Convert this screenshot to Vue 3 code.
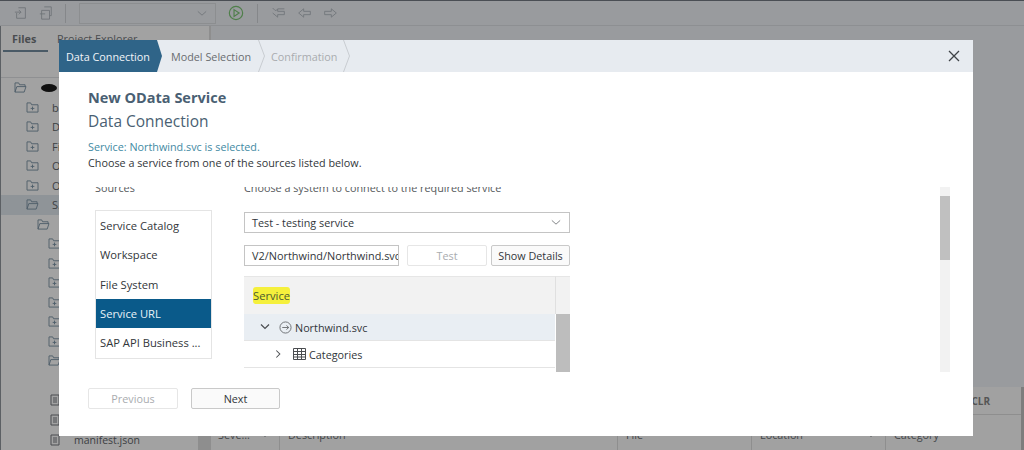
<script setup>
const sources = ['Service Catalog', 'Workspace', 'File System', 'Service URL', 'SAP API Business ...']
const treeFolders = [
  { label: 'bi', open: false, indent: 0 },
  { label: 'D', open: false, indent: 0 },
  { label: 'Fi', open: false, indent: 0 },
  { label: 'O', open: false, indent: 0 },
  { label: 'O', open: false, indent: 0 },
  { label: 'S.', open: true, indent: 0, active: true },
  { label: '', open: true, indent: 1 },
  { label: '', open: false, indent: 2 },
  { label: '', open: false, indent: 2 },
  { label: '', open: false, indent: 2 },
  { label: '', open: false, indent: 2 },
  { label: '', open: false, indent: 2 },
  { label: '', open: false, indent: 2 },
  { label: '', open: true, indent: 2 },
]
</script>

<template>
  <div class="page">
    <header class="toolbar">
      <svg class="tb-icon" viewBox="0 0 16 16"><path d="M5 2h8v12H3V8M1 7h7M5.500 4.500 8 7 5.500 9.500" /></svg>
      <svg class="tb-icon" viewBox="0 0 16 16"><path d="M6 1h8v10h-2M3 5h9v10H3zM1 9h6" /></svg>
      <span class="tb-sep"></span>
      <div class="tb-select">
        <svg viewBox="0 0 12 8"><path d="M1 1.500 6 6l5-4.500" /></svg>
      </div>
      <svg class="tb-run" viewBox="0 0 18 18"><circle cx="9" cy="9" r="7.500" /><path d="M6.800 5.200 12.500 9l-5.700 3.800z" /></svg>
      <span class="tb-sep"></span>
      <svg class="tb-arrow" viewBox="0 0 18 14"><path d="M2 1l3 3 3-1v-1l8 0M8 3v2h8v4H8v3L2 7" /></svg>
      <svg class="tb-arrow" viewBox="0 0 18 14"><path d="M8 2 2 7l6 5V9h8V5H8z" /></svg>
      <svg class="tb-arrow" viewBox="0 0 18 14"><path d="M10 2l6 5-6 5V9H2V5h8z" /></svg>
    </header>

    <div class="workspace">
      <aside class="sidebar">
        <div class="tabs">
          <span class="tab active">Files</span>
          <span class="tab">Project Explorer</span>
        </div>
        <div class="side-tools"></div>
        <div class="tree">
          <div class="tree-row root">
            <svg class="folder" viewBox="0 0 14 12"><path d="M1 11V1h4l1 2h6v2M1 11l2-6h10l-2 6z" /></svg>
            <span class="blot"></span>
          </div>
          <div v-for="(f, i) in treeFolders" :key="i" class="tree-row" :class="[{ hl: f.active }, 'ind' + f.indent]">
            <svg v-if="f.open" class="folder" viewBox="0 0 14 12"><path d="M1 11V1h4l1 2h6v2M1 11l2-6h10l-2 6z" /></svg>
            <svg v-else class="folder" viewBox="0 0 14 12"><path d="M1 1h4l1 2h7v8H1zM7 5v4M5 7h4" /></svg>
            <span>{{ f.label }}</span>
          </div>
        </div>
        <div class="files">
          <div class="file-row"><svg class="doc" viewBox="0 0 10 12"><path d="M1 1h8v10H1zM3 4h4M3 6h4M3 8h4" /></svg></div>
          <div class="file-row"><svg class="doc" viewBox="0 0 10 12"><path d="M1 1h8v10H1zM3 4h4M3 6h4M3 8h4" /></svg></div>
          <div class="file-row"><svg class="doc" viewBox="0 0 10 12"><path d="M1 1h8v10H1zM3 4h4M3 6h4M3 8h4" /></svg><span>manifest.json</span></div>
        </div>
      </aside>
      <div class="splitter"></div>
      <main class="content">
        <div class="spacer"></div>
        <div class="table-head"><span>CLR</span></div>
        <div class="table-row">
          <span class="cell sort first">Seve...</span>
          <span class="cell">Description</span>
          <span class="cell">File</span>
          <span class="cell sort">Location</span>
          <span class="cell">Category</span>
        </div>
      </main>
    </div>

    <section class="modal">
      <div class="steps">
        <div class="step current">Data Connection</div>
        <div class="step">Model Selection<svg viewBox="0 0 7 32"><path d="M0.500 0 6.500 16 0.500 32" /></svg></div>
        <div class="step muted">Confirmation<svg viewBox="0 0 7 32"><path d="M0.500 0 6.500 16 0.500 32" /></svg></div>
        <svg class="close" viewBox="0 0 12 12"><path d="M1 1l10 10M11 1 1 11" /></svg>
      </div>

      <div class="body">
        <h1>New OData Service</h1>
        <h2>Data Connection</h2>
        <p class="selected">Service: Northwind.svc is selected.</p>
        <p class="hint">Choose a service from one of the sources listed below.</p>

        <div class="scroll-area">
          <div class="scroll-inner">
            <div class="src-col">
              <div class="src-label">Sources</div>
              <ul class="src-list">
                <li v-for="s in sources" :key="s" :class="{ on: s === 'Service URL' }">{{ s }}</li>
              </ul>
            </div>
            <div class="main-col">
              <div class="sys-label">Choose a system to connect to the required service</div>
              <div class="select">
                <span>Test - testing service</span>
                <svg viewBox="0 0 12 8"><path d="M1 1.500 6 6l5-4.500" /></svg>
              </div>
              <div class="url-row">
                <div class="url">V2/Northwind/Northwind.svc</div>
                <button class="btn disabled test">Test</button>
                <button class="btn details">Show Details</button>
              </div>
              <div class="grid">
                <div class="grid-main">
                  <div class="grid-head"><mark>Service</mark></div>
                  <div class="grid-row sel">
                    <svg class="chev down" viewBox="0 0 10 8"><path d="M1 1.500 5 5.500l4-4" /></svg>
                    <svg class="svc" viewBox="0 0 14 14"><circle cx="7" cy="7" r="6" /><path d="M3.500 7h7M8 4.800 10.500 7 8 9.200" /></svg>
                    <span>Northwind.svc</span>
                  </div>
                  <div class="grid-row child">
                    <svg class="chev right" viewBox="0 0 8 10"><path d="M1.500 1l4 4-4 4" /></svg>
                    <svg class="tbl" viewBox="0 0 13 12"><path d="M.5.500h12v11H.5zM.5 3.500h12M.5 6.500h12M.5 9h12M4.500.5v11M8.500.5v11" /></svg>
                    <span>Categories</span>
                  </div>
                  <div class="grid-row blank"></div>
                </div>
                <div class="grid-side">
                  <div class="side-head"></div>
                  <div class="side-thumb"></div>
                </div>
              </div>
            </div>
          </div>
          <div class="vbar"><div class="vthumb"></div></div>
        </div>

        <div class="footer">
          <button class="btn disabled prev">Previous</button>
          <button class="btn next">Next</button>
        </div>
      </div>
    </section>
  </div>
</template>

<style>
html, body { margin: 0; background: #9a9c9f; }
</style>

<style scoped>
.page {
  position: relative;
  width: 1024px;
  height: 450px;
  overflow: hidden;
  background: #999b9e;
  font-family: "Open Sans", "Noto Sans", sans-serif;
  color: #32363a;
}
.toolbar {
  height: 26px;
  display: flex;
  align-items: center;
  padding-left: 14px;
  box-sizing: border-box;
  border-top: 1px solid #4a4e54;
  border-bottom: 1px solid #8d8f92;
}
.tb-icon { width: 14px; height: 14px; margin-right: 11px; fill: none; stroke: #6f7478; stroke-width: 1; }
.tb-sep { width: 1px; height: 19px; background: #85878a; margin: 0 13px 0 1px; }
.tb-select {
  width: 137px; height: 21px; box-sizing: border-box; border: 1px solid #8c8e90;
  display: flex; align-items: center; justify-content: flex-end; padding-right: 8px;
}
.tb-select svg { width: 10px; height: 7px; fill: none; stroke: #6f7478; }
.tb-run { width: 16px; height: 16px; margin: 0 12px 0 12px; fill: none; stroke: #4f7f4a; stroke-width: 1.300; }
.tb-arrow { width: 15px; height: 12px; margin-right: 11px; fill: none; stroke: #6f7478; }
.workspace { display: flex; height: 424px; }
.sidebar { width: 198px; flex: none; background: #a2a2a2; display: flex; flex-direction: column; border-left: 1px solid #5c6064; box-sizing: border-box; }
.tabs { height: 26px; display: flex; gap: 9px; padding-left: 2px; width: 208px; flex: none; box-sizing: border-box; background: #a2a2a2; position: relative; }
.tab { font-size: 10.800px; line-height: 26px; color: #4a4d50; white-space: nowrap; }
.tab.active { font-weight: 700; width: 45px; padding-left: 9px; box-sizing: border-box; border-bottom: 2px solid #4a5a66; height: 26px; }
.side-tools { height: 25px; flex: none; border-bottom: 1px solid #8f9092; }
.tree { display: flex; flex-direction: column; flex: none; }
.tree-row { height: 19.500px; flex: none; display: flex; align-items: center; gap: 13px; font-size: 11px; padding-left: 25px; color: #3c4043; }
.tree-row.root { padding-left: 13px; gap: 14px; }
.tree-row.ind1 { padding-left: 36px; }
.tree-row.ind2 { padding-left: 47px; }
.tree-row.hl { background: #8f9498; }
.folder { width: 13px; height: 11px; fill: none; stroke: #4f5e6a; flex: none; }
.blot { width: 16px; height: 8px; background: #111; border-radius: 50%; }
.files { margin-top: 19px; display: flex; flex-direction: column; flex: none; }
.file-row { height: 20px; flex: none; display: flex; align-items: center; padding-left: 49px; gap: 14px; font-size: 10.500px; color: #3c4043; }
.doc { width: 10px; height: 12px; fill: none; stroke: #4a4d50; flex: none; }
.splitter { width: 13px; flex: none; background: #8e8e8e; }
.content { flex: 1; display: flex; flex-direction: column; border-right: 3px solid transparent; }
.spacer { height: 361px; flex: none; }
.table-head { height: 27px; flex: none; background: #a1a1a1; border-bottom: 1px solid #8e8e8e; display: flex; justify-content: flex-end; align-items: center; padding-right: 31px; font-size: 10px; font-weight: 700; color: #555; box-shadow: 3px 0 0 #7d7d7d; }
.table-row { flex: 1; background: #a1a1a1; font-size: 10.800px; display: grid; grid-template-columns: 68px 338px 134px 134px 1fr; color: #44474a; box-shadow: 3px 0 0 #7d7d7d; }
.cell { padding: 12px 0 0 8px; position: relative; }
.cell.first { padding-left: 7px; }
.cell + .cell { border-left: 1px solid #8e8e8e; }
.cell.sort::after { content: ""; position: absolute; right: 11px; top: 19px; border: 3px solid transparent; border-top-color: #55585b; }
.modal {
  position: absolute;
  z-index: 2;
  left: 59px;
  top: 40px;
  width: 914px;
  height: 396px;
  background: #fff;
  display: flex;
  flex-direction: column;
}
.steps { height: 32px; flex: none; background: #e7ebf0; display: flex; align-items: stretch; position: relative; font-size: 10.800px; }
.step { display: flex; align-items: center; position: relative; color: #6a6d70; white-space: nowrap; }
.step svg { position: absolute; right: -7px; top: 0; width: 7px; height: 32px; fill: none; stroke: #c8ccd1; }
.step.current { width: 103px; box-sizing: border-box; padding-left: 7px; color: #f2f5f8; background: #2f6488; clip-path: polygon(0 0, 98px 0, 103px 16px, 98px 32px, 0 32px); }
.step:nth-child(2) { width: 96px; padding-left: 9px; box-sizing: border-box; margin-right: 7px; }
.step.muted { width: 78px; padding-left: 6px; box-sizing: border-box; color: #a9acaf; }
.close { position: absolute; right: 13px; top: 10px; width: 12px; height: 12px; fill: none; stroke: #3f4347; stroke-width: 1.300; }
.body { flex: 1; min-height: 0; padding: 16px 23px 0 29px; display: flex; flex-direction: column; }
h1 { margin: 0; font-size: 14.500px; line-height: 19px; font-weight: 700; color: #4a5f73; }
h2 { margin: 3px 0 0; font-size: 15.500px; line-height: 22px; font-weight: 400; color: #4a5f73; }
.selected { margin: 7px 0 0; font-size: 10.800px; line-height: 16px; color: #3f8aa3; }
.hint { margin: 0; font-size: 10.800px; line-height: 16px; color: #32363a; }
.scroll-area { height: 185px; margin-top: 16px; flex: none; position: relative; overflow: hidden; display: flex; justify-content: space-between; }
.scroll-inner { display: flex; padding-left: 7px; margin-top: -7px; }
.src-col { width: 149px; flex: none; }
.src-label, .sys-label { font-size: 10.800px; line-height: 16px; color: #55595c; }
.src-list { list-style: none; margin: 14px 0 0; padding: 0; width: 117px; border: 1px solid #e4e4e4; box-sizing: border-box; height: 149px; }
.src-list li { height: 29.300px; line-height: 29px; font-size: 11.200px; padding-left: 4px; color: #32363a; white-space: nowrap; }
.src-list li.on { background: #0a5a8a; color: #e8f2f8; }
.main-col { width: 326px; flex: none; }
.select { margin-top: 16px; height: 21px; box-sizing: border-box; border: 1px solid #c4c4c4; display: flex; align-items: center; justify-content: space-between; padding: 0 8px 0 7px; font-size: 10.800px; }
.select svg { width: 10px; height: 7px; fill: none; stroke: #6a6d70; }
.url-row { display: flex; margin-top: 12px; height: 21px; }
.url { width: 155px; box-sizing: border-box; border: 1px solid #c4c4c4; padding: 0 0 0 7px; font-size: 10.900px; line-height: 19px; white-space: nowrap; overflow: hidden; }
.btn { font-family: inherit; font-size: 10.800px; color: #32363a; background: #fafafa; border: 1px solid #c9c9c9; border-radius: 2px; padding: 0; }
.btn.disabled { color: #a9acaf; border-color: #e6e6e6; background: #fff; }
.test { width: 80px; margin-left: 8px; }
.details { width: 79px; margin-left: 4px; }
.grid { margin-top: 10px; display: flex; width: 326px; }
.grid-main { width: 311px; flex: none; }
.grid-head { height: 38px; background: #f2f2f2; border-top: 1px solid #e6e6e6; box-sizing: border-box; display: flex; align-items: center; padding-left: 9px; font-size: 11.200px; }
mark { background: #f5f03c; color: #4a5a30; border-radius: 3px; padding: 1px 0; }
.grid-row { height: 27px; box-sizing: border-box; border-bottom: 1px solid #e4e4e4; display: flex; align-items: center; font-size: 10.800px; }
.grid-row.sel { background: #e9eef3; padding-left: 16px; }
.grid-row.child { padding-left: 31px; }
.chev { fill: none; stroke: #4a4d50; stroke-width: 1.200; flex: none; }
.chev.down { width: 10px; height: 8px; }
.chev.right { width: 7px; height: 10px; }
.svc { width: 13px; height: 13px; margin: 0 3px 0 9px; fill: none; stroke: #6a6d70; }
.tbl { width: 13px; height: 12px; margin: 0 3px 0 11px; fill: none; stroke: #4a4d50; }
.grid-side { width: 15px; flex: none; }
.side-head { height: 38px; background: #f2f2f2; border-left: 1px solid #e0e0e0; border-top: 1px solid #e6e6e6; box-sizing: border-box; }
.side-thumb { height: 70px; background: #bdbdbd; margin-left: 1px; }
.vbar { width: 10px; flex: none; background: #f2f2f2; }
.vthumb { height: 64px; margin-top: 9px; background: #c0c0c0; }
.footer { display: flex; gap: 13px; margin-top: 16px; }
.footer .btn { height: 21px; }
.prev { width: 90px; }
.next { width: 89px; }
</style>
